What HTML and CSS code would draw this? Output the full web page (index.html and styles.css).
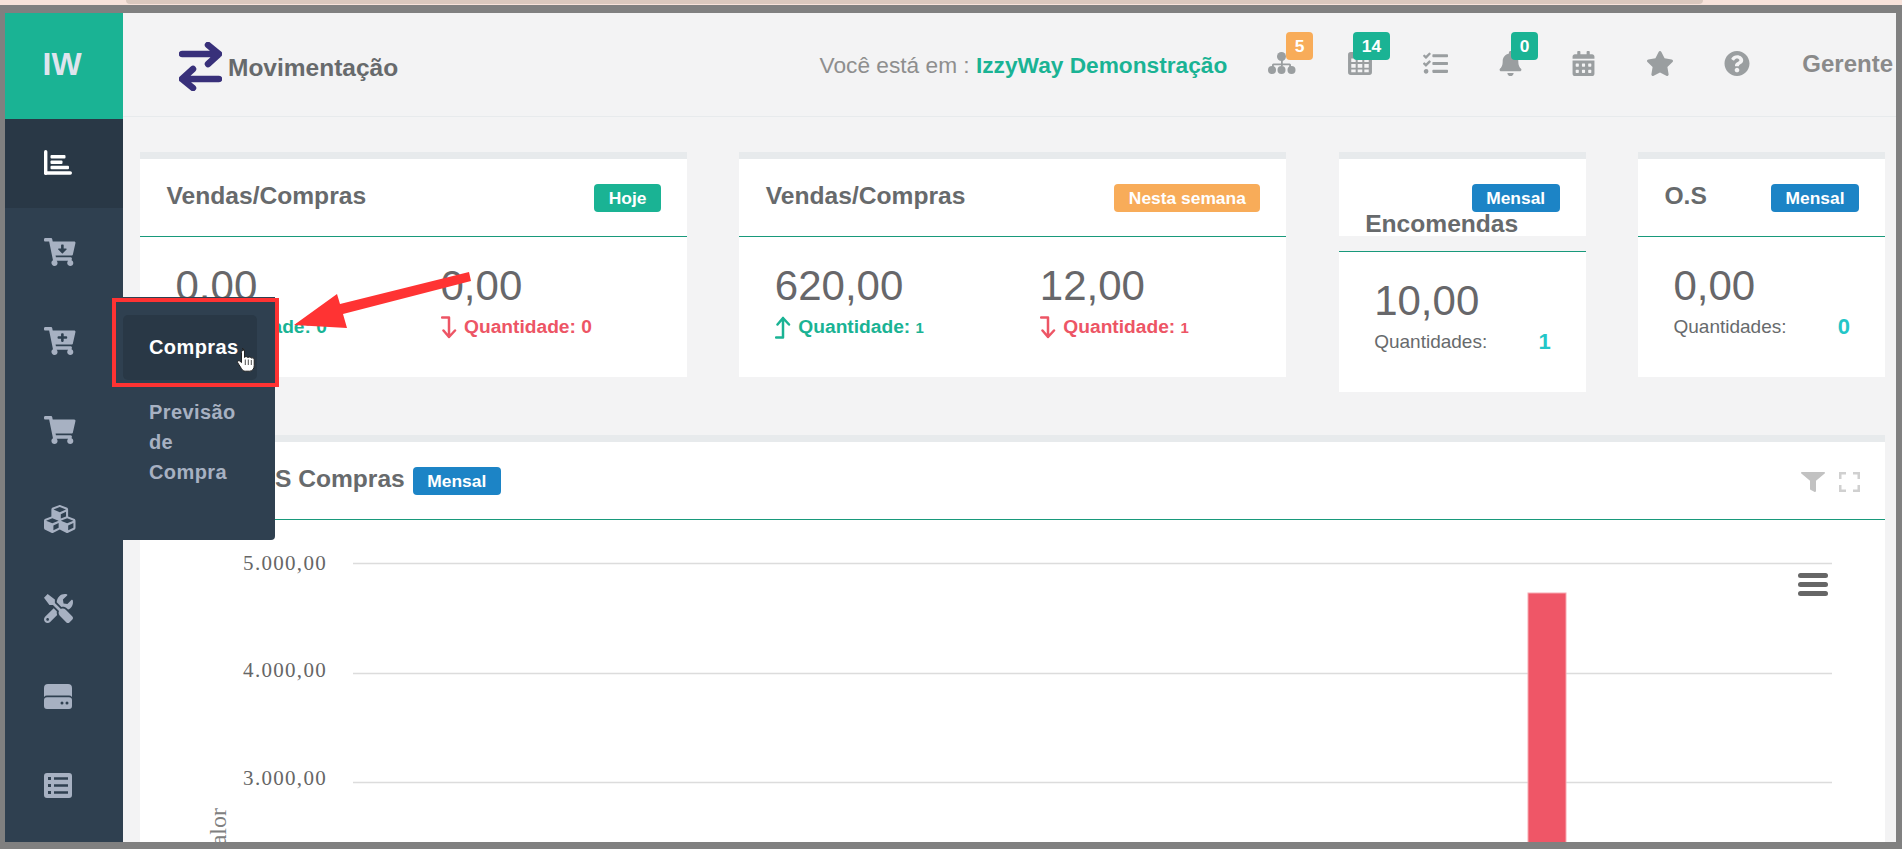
FILE: index.html
```html
<!DOCTYPE html>
<html lang="pt-BR">
<head>
<meta charset="utf-8">
<title>Movimentação</title>
<link rel="stylesheet" href="styles.css">
</head>
<body>
<div class="topstrip"><div class="tab"></div></div>
<div class="frame">
  <aside class="sidebar">
    <div class="logo">IW</div>
    <nav>
      <a class="nav-item active">
        <svg class="ni" viewBox="0 0 28 25"><rect x="0" y="0" width="3.400" height="25" rx="1.700"/><rect x="0" y="21.300" width="28" height="3.400" rx="1.700"/><rect x="6.500" y="5" width="15" height="3.400" rx="1"/><rect x="6.500" y="10.500" width="12" height="3.400" rx="1"/><rect x="6.500" y="15.800" width="18.500" height="3.400" rx="1"/></svg>
      </a>
      <a class="nav-item">
        <svg class="nc" viewBox="0 0 576 512"><path d="M504.717 320H211.572l6.545 32h268.418c15.401 0 26.816 14.301 23.403 29.319l-5.517 24.276C523.112 414.668 536 433.828 536 456c0 31.202-25.519 56.444-56.824 55.994-29.823-.429-54.35-24.631-55.155-54.447-.44-16.287 6.085-31.049 16.803-41.548H231.176C241.553 426.165 248 440.326 248 456c0 31.813-26.528 57.431-58.67 55.938-28.54-1.325-51.751-24.385-53.251-52.917-1.158-22.034 10.436-41.455 28.051-51.586L93.883 64H24C10.745 64 0 53.255 0 40V24C0 10.745 10.745 0 24 0h102.529c11.401 0 21.228 8.021 23.513 19.19L159.208 64H551.99c15.401 0 26.816 14.301 23.403 29.319l-47.273 208C525.637 312.246 515.923 320 504.717 320zM403.029 192H360v-60c0-6.627-5.373-12-12-12h-24c-6.627 0-12 5.373-12 12v60h-43.029c-10.691 0-16.045 12.926-8.485 20.485l67.029 67.029c4.686 4.686 12.284 4.686 16.971 0l67.029-67.029c7.559-7.559 2.205-20.485-8.486-20.485z"/></svg>
      </a>
      <a class="nav-item">
        <svg class="nc" viewBox="0 0 576 512"><path d="M504.717 320H211.572l6.545 32h268.418c15.401 0 26.816 14.301 23.403 29.319l-5.517 24.276C523.112 414.668 536 433.828 536 456c0 31.202-25.519 56.444-56.824 55.994-29.823-.429-54.35-24.631-55.155-54.447-.44-16.287 6.085-31.049 16.803-41.548H231.176C241.553 426.165 248 440.326 248 456c0 31.813-26.528 57.431-58.67 55.938-28.54-1.325-51.751-24.385-53.251-52.917-1.158-22.034 10.436-41.455 28.051-51.586L93.883 64H24C10.745 64 0 53.255 0 40V24C0 10.745 10.745 0 24 0h102.529c11.401 0 21.228 8.021 23.513 19.19L159.208 64H551.99c15.401 0 26.816 14.301 23.403 29.319l-47.273 208C525.637 312.246 515.923 320 504.717 320zM408 168h-48v-40c0-8.837-7.163-16-16-16h-16c-8.837 0-16 7.163-16 16v40h-48c-8.837 0-16 7.163-16 16v16c0 8.837 7.163 16 16 16h48v40c0 8.837 7.163 16 16 16h16c8.837 0 16-7.163 16-16v-40h48c8.837 0 16-7.163 16-16v-16c0-8.837-7.163-16-16-16z"/></svg>
        <div class="popup">
          <div class="popup-item current">Compras</div>
          <div class="popup-item">Previsão de Compra</div>
        </div>
      </a>
      <a class="nav-item">
        <svg class="nc" viewBox="0 0 576 512"><path d="M528.12 301.319l47.273-208C578.806 78.301 567.391 64 551.99 64H159.208l-9.166-44.81C147.758 8.021 137.93 0 126.529 0H24C10.745 0 0 10.745 0 24v16c0 13.255 10.745 24 24 24h69.883l70.248 343.435C147.325 417.1 136 435.222 136 456c0 30.928 25.072 56 56 56s56-25.072 56-56c0-15.674-6.447-29.835-16.824-40h209.647C430.447 426.165 424 440.326 424 456c0 30.928 25.072 56 56 56s56-25.072 56-56c0-22.172-12.888-41.332-31.579-50.405l5.517-24.276c3.413-15.018-8.002-29.319-23.403-29.319H218.117l-6.545-32h293.145c11.206 0 20.92-7.754 23.403-18.681z"/></svg>
      </a>
      <a class="nav-item">
        <svg class="nc" viewBox="0 32 512 448" preserveAspectRatio="none"><path d="M488.6 250.2L392 214V105.5c0-15-9.3-28.4-23.4-33.7l-100-37.5c-8.1-3.1-17.1-3.1-25.3 0l-100 37.5c-14.1 5.3-23.4 18.7-23.4 33.7V214l-96.6 36.2C9.3 255.5 0 268.9 0 283.9V394c0 13.6 7.7 26.1 19.9 32.2l100 50c10.1 5.1 22.1 5.1 32.2 0l103.9-52 103.9 52c10.1 5.1 22.1 5.1 32.2 0l100-50c12.2-6.1 19.9-18.6 19.9-32.2V283.9c0-15-9.3-28.4-23.4-33.7zM358 214.8l-85 31.9v-68.2l85-37v73.3zM154 104.1l102-38.2 102 38.2v.6l-102 41.4-102-41.4v-.6zm84 291.1l-85 42.5v-79.1l85-38.8v75.4zm0-112l-102 41.4-102-41.4v-.6l102-38.2 102 38.2v.6zm240 112l-85 42.5v-79.1l85-38.8v75.4zm0-112l-102 41.4-102-41.4v-.6l102-38.2 102 38.2v.6z"/></svg>
      </a>
      <a class="nav-item tools-item">
        <svg class="ni" viewBox="0 0 512 512"><path d="M501.1 395.7L384 278.6c-23.1-23.1-57.6-27.6-85.4-13.9L192 158.1V96L64 0 0 64l96 128h62.1l106.6 106.6c-13.6 27.8-9.2 62.3 13.9 85.4l117.1 117.1c14.6 14.6 38.2 14.6 52.7 0l52.7-52.7c14.5-14.6 14.5-38.2 0-52.7zM331.7 225c28.3 0 54.9 11 74.9 31l19.4 19.4c15.8-6.9 30.8-16.5 43.8-29.5 37.1-37.1 49.7-89.3 37.9-136.7-2.2-9-13.5-12.1-20.1-5.5l-74.4 74.4-67.9-11.3L334 98.9l74.4-74.4c6.6-6.6 3.4-17.9-5.7-20.2-47.4-11.7-99.6.9-136.6 37.9-28.5 28.5-41.9 66.1-41.2 103.6l82.1 82.1c8.1-1.9 16.5-2.9 24.7-2.9zm-103.9 82l-56.7-56.7L18.7 402.8c-25 25-25 65.5 0 90.5s65.5 25 90.5 0l123.6-123.6c-7.6-19.9-9.9-41.6-5-62.7zM64 472c-13.2 0-24-10.8-24-24 0-13.3 10.7-24 24-24s24 10.7 24 24c0 13.2-10.7 24-24 24z"/></svg>
      </a>
      <a class="nav-item">
        <svg class="ni flat" viewBox="0 0 28 25"><path d="M4 0h20a4 4 0 0 1 4 4v9a4 4 0 0 0-3-1.4H3A4 4 0 0 0 0 13V4a4 4 0 0 1 4-4z"/><path fill-rule="evenodd" d="M3 13.2h22a3 3 0 0 1 3 3V22a3 3 0 0 1-3 3H3a3 3 0 0 1-3-3v-5.800a3 3 0 0 1 3-3zM18 17.600a1.500 1.500 0 1 0 0 3 1.500 1.500 0 0 0 0-3zm5 0a1.500 1.500 0 1 0 0 3 1.500 1.500 0 0 0 0-3z"/></svg>
      </a>
      <a class="nav-item">
        <svg class="ni flat" viewBox="0 0 28 25"><path fill-rule="evenodd" d="M3 0h22a3 3 0 0 1 3 3v19a3 3 0 0 1-3 3H3a3 3 0 0 1-3-3V3a3 3 0 0 1 3-3zM4 4v3h3V4zm6 .2v2.600h14V4.200zM4 11v3h3v-3zm6 .2v2.600h14v-2.600zM4 18v3h3v-3zm6 .2v2.600h14v-2.600z"/></svg>
      </a>
    </nav>
  </aside>

  <div class="main">
    <header class="topbar">
      <svg class="swap" viewBox="0 0 43 49"><path d="M3 12h37M29 3l11 9-11 10M40 37H3M14 27L3 37l11 9"/></svg>
      <h2 class="page-title">Movimentação</h2>
      <p class="crumb">Você está em : <strong>IzzyWay Demonstração</strong></p>
      <div class="tools">
        <div class="tool">
          <svg class="ti i-site" viewBox="0 0 29 22"><rect x="14" y="8" width="1.800" height="6"/><path d="M5 16v-3a1.500 1.500 0 0 1 1.500-1.500h16a1.500 1.500 0 0 1 1.500 1.500v3h-1.800v-2.700H6.800V16z"/><circle cx="14.500" cy="4.500" r="4.500"/><circle cx="5" cy="18" r="4"/><circle cx="14.500" cy="18" r="4"/><circle cx="24.500" cy="18" r="4"/></svg>
          <span class="count warn one">5</span>
        </div>
        <div class="tool">
          <svg class="ti i-table" viewBox="0 0 26 25"><path fill-rule="evenodd" d="M3 0h20a3 3 0 0 1 3 3v19a3 3 0 0 1-3 3H3a3 3 0 0 1-3-3V3a3 3 0 0 1 3-3zM3.500 7v4h4.800V7zm7 0v4h5V7zm7.200 0v4h4.800V7zM3.500 13v4h4.800v-4zm7 0v4h5v-4zm7.200 0v4h4.800v-4zM3.500 19v3h4.800v-3zm7 0v3h5v-3zm7.200 0v3h4.800v-3z"/></svg>
          <span class="count green two">14</span>
        </div>
        <div class="tool">
          <svg class="ti i-tasks" viewBox="0 0 512 512"><path d="M139.61 35.5a12 12 0 0 0-17 0L58.93 98.81l-22.7-22.12a12 12 0 0 0-17 0L3.53 92.41a12 12 0 0 0 0 17l47.59 47.4a12.78 12.78 0 0 0 17.61 0l15.59-15.62L156.52 69a12.09 12.09 0 0 0 .09-17zm0 159.19a12 12 0 0 0-17 0l-63.68 63.72-22.7-22.1a12 12 0 0 0-17 0L3.53 252a12 12 0 0 0 0 17L51 316.5a12.77 12.77 0 0 0 17.6 0l15.7-15.69 72.2-72.22a12 12 0 0 0 .09-16.9zM64 368c-26.49 0-48.59 21.5-48.59 48S37.53 464 64 464a48 48 0 0 0 0-96zm432 16H208a16 16 0 0 0-16 16v32a16 16 0 0 0 16 16h288a16 16 0 0 0 16-16v-32a16 16 0 0 0-16-16zm0-320H208a16 16 0 0 0-16 16v32a16 16 0 0 0 16 16h288a16 16 0 0 0 16-16V80a16 16 0 0 0-16-16zm0 160H208a16 16 0 0 0-16 16v32a16 16 0 0 0 16 16h288a16 16 0 0 0 16-16v-32a16 16 0 0 0-16-16z"/></svg>
        </div>
        <div class="tool">
          <svg class="ti i-tall" viewBox="0 0 448 512"><path d="M224 512c35.32 0 63.97-28.65 63.97-64H160.03c0 35.35 28.65 64 63.97 64zm215.39-149.71c-19.32-20.76-55.47-51.99-55.47-154.29 0-77.7-54.48-139.9-127.94-155.16V32c0-17.67-14.32-32-31.98-32s-31.98 14.33-31.98 32v20.84C118.56 68.1 64.08 130.3 64.08 208c0 102.3-36.15 133.53-55.47 154.29-6 6.45-8.66 14.16-8.61 21.71.11 16.4 12.98 32 32.1 32h383.8c19.12 0 32-15.6 32.1-32 .05-7.55-2.61-15.27-8.61-21.71z"/></svg>
          <span class="count green three">0</span>
        </div>
        <div class="tool">
          <svg class="ti i-tall" viewBox="0 0 448 512"><path d="M0 464c0 26.5 21.5 48 48 48h352c26.5 0 48-21.5 48-48V192H0v272zm320-196c0-6.6 5.4-12 12-12h40c6.6 0 12 5.4 12 12v40c0 6.6-5.4 12-12 12h-40c-6.6 0-12-5.400-12-12v-40zm0 128c0-6.6 5.4-12 12-12h40c6.6 0 12 5.4 12 12v40c0 6.6-5.4 12-12 12h-40c-6.6 0-12-5.4-12-12v-40zM192 268c0-6.6 5.4-12 12-12h40c6.6 0 12 5.4 12 12v40c0 6.6-5.4 12-12 12h-40c-6.6 0-12-5.4-12-12v-40zm0 128c0-6.6 5.4-12 12-12h40c6.6 0 12 5.4 12 12v40c0 6.6-5.4 12-12 12h-40c-6.6 0-12-5.4-12-12v-40zM64 268c0-6.6 5.4-12 12-12h40c6.6 0 12 5.4 12 12v40c0 6.6-5.4 12-12 12H76c-6.6 0-12-5.4-12-12v-40zm0 128c0-6.6 5.4-12 12-12h40c6.6 0 12 5.4 12 12v40c0 6.6-5.4 12-12 12H76c-6.6 0-12-5.4-12-12v-40zM400 64h-48V16c0-8.800-7.200-16-16-16h-32c-8.800 0-16 7.200-16 16v48H160V16c0-8.800-7.200-16-16-16h-32c-8.800 0-16 7.200-16 16v48H48C21.500 64 0 85.500 0 112v48h448v-48c0-26.500-21.500-48-48-48z"/></svg>
        </div>
        <div class="tool">
          <svg class="ti i-star" viewBox="0 0 576 512"><path d="M259.3 17.8L194 150.2 47.9 171.5c-26.2 3.8-36.7 36.1-17.7 54.6l105.7 103-25 145.5c-4.5 26.3 23.2 46 46.4 33.7L288 439.6l130.7 68.7c23.2 12.2 50.9-7.4 46.4-33.7l-25-145.5 105.7-103c19-18.5 8.5-50.8-17.7-54.6L382 150.2 316.7 17.8c-11.7-23.6-45.6-23.9-57.4 0z"/></svg>
        </div>
        <div class="tool">
          <svg class="ti i-help" viewBox="8 8 496 496"><path d="M504 256c0 136.997-111.043 248-248 248S8 392.997 8 256C8 119.083 119.043 8 256 8s248 111.083 248 248zM262.655 90c-54.497 0-89.255 22.957-116.549 63.758-3.536 5.286-2.353 12.415 2.715 16.258l34.699 26.31c5.205 3.947 12.621 3.008 16.665-2.122 17.864-22.658 30.113-35.797 57.303-35.797 20.429 0 45.698 13.148 45.698 32.958 0 14.976-12.363 22.667-32.534 33.976C247.128 238.528 216 254.941 216 296v4c0 6.627 5.373 12 12 12h56c6.627 0 12-5.373 12-12v-1.333c0-28.462 83.186-29.647 83.186-106.667 0-58.002-60.165-102-116.531-102zM256 338c-25.365 0-46 20.635-46 46 0 25.364 20.635 46 46 46s46-20.636 46-46c0-25.365-20.635-46-46-46z"/></svg>
        </div>
      </div>
      <span class="user">Gerente</span>
    </header>

    <section class="content">
      <div class="cards">
        <article class="card">
          <div class="card-head"><h5 class="card-title">Vendas/Compras</h5><span class="label green">Hoje</span></div>
          <div class="card-body split">
            <div>
              <div class="value">0,00</div>
              <div class="qty up"><svg class="lvl" viewBox="0 0 16 23"><path d="M1 21.500h7V2M2.500 8.500L8 2l6 6.500"/></svg><span>Quantidade: 0</span></div>
            </div>
            <div>
              <div class="value">0,00</div>
              <div class="qty down"><svg class="lvl" viewBox="0 0 16 23"><path d="M1 1.500h7V21M2.500 14.500L8 21l6-6.500"/></svg><span>Quantidade: 0</span></div>
            </div>
          </div>
        </article>
        <article class="card">
          <div class="card-head"><h5 class="card-title">Vendas/Compras</h5><span class="label warn">Nesta semana</span></div>
          <div class="card-body split">
            <div>
              <div class="value">620,00</div>
              <div class="qty up"><svg class="lvl" viewBox="0 0 16 23"><path d="M1 21.500h7V2M2.500 8.500L8 2l6 6.500"/></svg><span>Quantidade: <small>1</small></span></div>
            </div>
            <div>
              <div class="value">12,00</div>
              <div class="qty down"><svg class="lvl" viewBox="0 0 16 23"><path d="M1 1.500h7V21M2.500 14.500L8 21l6-6.500"/></svg><span>Quantidade: <small>1</small></span></div>
            </div>
          </div>
        </article>
        <article class="card">
          <div class="card-head stacked"><span class="label blue">Mensal</span><h5 class="card-title">Encomendas</h5></div>
          <div class="card-body gapped">
            <div class="value">10,00</div>
            <div class="total"><span>Quantidades:</span><b>1</b></div>
          </div>
        </article>
        <article class="card">
          <div class="card-head"><h5 class="card-title">O.S</h5><span class="label blue">Mensal</span></div>
          <div class="card-body">
            <div class="value">0,00</div>
            <div class="total"><span>Quantidades:</span><b>0</b></div>
          </div>
        </article>
      </div>

      <article class="card chart-card">
        <div class="card-head chart-head">
          <h5 class="card-title">O.S Compras</h5>
          <span class="label blue">Mensal</span>
          <svg class="ctl filter" viewBox="0 0 512 512" preserveAspectRatio="none"><path d="M487.976 0H24.028C2.71 0-8.047 25.866 7.058 40.971L192 225.941V432c0 7.831 3.821 15.17 10.237 19.662l80 55.98C298.02 518.69 320 507.493 320 487.98V225.941l184.947-184.97C520.021 25.896 509.338 0 487.976 0z"/></svg>
          <svg class="ctl expand" viewBox="0 0 21 20"><path d="M1 7V1h6M14 1h6v6M20 13v6h-6M7 19H1v-6"/></svg>
        </div>
        <svg class="chart" viewBox="0 0 1745 322">
          <g class="grid">
            <line x1="213" x2="1692" y1="43.5" y2="43.5"/>
            <line x1="213" x2="1692" y1="153.500" y2="153.500"/>
            <line x1="213" x2="1692" y1="262.500" y2="262.500"/>
          </g>
          <g class="ylabels">
            <text x="187" y="50">5.000,00</text>
            <text x="187" y="157">4.000,00</text>
            <text x="187" y="265">3.000,00</text>
          </g>
          <text class="ytitle" transform="translate(86 288) rotate(-90)">Valor</text>
          <rect class="bar" x="1388" y="73" width="38" height="260"/>
          <g class="burger">
            <rect x="1658" y="53" width="30" height="5" rx="2.500"/>
            <rect x="1658" y="62" width="30" height="5" rx="2.500"/>
            <rect x="1658" y="71" width="30" height="5" rx="2.500"/>
          </g>
        </svg>
      </article>
    </section>
  </div>
</div>

<svg class="annot" viewBox="0 0 1902 849">
  <rect class="annot-box" x="114" y="300" width="163" height="85"/>
  <polygon class="annot-arrow" points="294,325 337,294 340,304 469,272 471,281 343,314 347,328"/>
  <path class="annot-hand" d="M242 348.500c1.500 0 2.500 1 2.500 2.500v6.500c.5-1.200 3-1.200 3.500.3.400-1.100 3-1 3.400.4.600-.7 2.800-.5 2.800 1.500v6c0 3-1.800 5.500-4.700 5.500h-4c-2 0-3-.8-4-2.500l-3.800-6c-.8-1.400.8-2.800 2.200-1.600l1.600 1.500v-10.100c0-1.500 1-2.500 2.500-2.500z"/>
  <path class="annot-hand-lines" d="M245.300 359.500v5.500M248.300 359.500v5.500M251.300 360v5"/>
</svg>
</body>
</html>
```
FILE: styles.css
```css
* { box-sizing: border-box; }
html, body { margin: 0; padding: 0; height: 100%; overflow: hidden; }
body {
  position: relative;
  background: #808080;
  font-family: "Liberation Sans", Arial, sans-serif;
  color: #676a6c;
}
h2, h5, p { margin: 0; }

.topstrip { height: 5px; background: #f7e2da; }
.tab { width: 1577px; height: 4px; margin-left: 126px; background: #dac8be; border-radius: 0 0 8px 8px; }

.frame {
  display: flex;
  height: 844px;
  padding: 8px 6px 7px 5px;
  background: #808080;
}

/* Sidebar */
.sidebar { position: relative; z-index: 2; width: 118px; flex: none; background: #2f4050; height: 829px; }
.logo {
  height: 106px;
  padding: 31px 0 0 37.500px;
  background: #1ab394;
  color: #dfe4ed;
  font-size: 32px;
  font-weight: 700;
  line-height: 40px;
}
.nav-item { position: relative; display: flex; align-items: center; height: 89px; padding: 0 0 2px 39px; }
.nav-item.active { padding-bottom: 3px; background: #293846; }
.ni { width: 28px; height: 28px; fill: #a7b1c2; }
.ni.flat { height: 25px; }
.nav-item.active .ni { height: 25px; fill: #fff; }
.nc { width: 31.500px; height: 28px; fill: #a7b1c2; }
.tools-item { padding-bottom: 0; }
.tools-item .ni { width: 29px; height: 29px; }

.popup {
  position: absolute;
  top: 0;
  left: 100%;
  width: 152px;
  height: 243px;
  padding-top: 18px;
  background: #2f4050;
  border-radius: 0 0 4px 0;
  font-size: 20px;
  font-weight: 700;
  letter-spacing: .4px;
  line-height: 30px;
  color: #a7b1c2;
}
.popup-item { padding: 0 26px; width: 134px; }
.popup-item.current {
  display: flex;
  align-items: center;
  height: 65px;
  padding-bottom: 2px;
  margin-bottom: 17px;
  background: #293846;
  border-radius: 5px;
  color: #fff;
}

/* Main */
.main { flex: 1; min-width: 0; height: 829px; overflow: hidden; background: #f3f3f4; }
.topbar {
  display: flex;
  align-items: center;
  height: 104px;
  padding: 0 3px 0 56px;
  border-bottom: 1px solid #e7eaec;
}
.swap { width: 43px; height: 49px; margin: 4px 6px 0 0; fill: none; stroke: #38307a; stroke-width: 6.500; stroke-linecap: round; stroke-linejoin: round; }
.page-title { font-size: 24.500px; font-weight: 700; line-height: 30px; margin-top: 7px; color: #676a6c; }
.crumb { margin-left: auto; font-size: 22.700px; line-height: 28px; color: #8e8e8e; white-space: nowrap; }
.crumb strong { color: #1ab394; }
.tools { display: flex; gap: 50.500px; margin-left: 40px; }
.tool { position: relative; display: flex; align-items: center; height: 28px; margin-bottom: 3px; }
.ti { fill: #9a9ea0; }
.i-site { width: 29px; height: 22px; }
.i-table { width: 26px; height: 23px; }
.i-tasks { width: 25px; height: 25px; }
.i-tall { width: 23px; height: 25px; }
.i-star { width: 28px; height: 25px; }
.i-help { width: 26px; height: 25px; }
.count {
  position: absolute;
  top: -17px;
  height: 28px;
  padding: 0 9px;
  border-radius: 4px;
  color: #fff;
  font-size: 17.400px;
  font-weight: 700;
  line-height: 28px;
}
.count.one { left: 18.500px; }
.count.two { left: 6px; }
.count.three { left: 12px; }
.user { margin: 0 0 1px 52px; font-size: 24px; font-weight: 700; color: #8a8a8a; white-space: nowrap; }

.green { background: #1ab394; }
.warn { background: #f8ac59; }
.blue { background: #1c84c6; }

.content { padding: 35px 11px 0 17px; }
.cards { display: grid; grid-template-columns: 547px 547px 247px 247px; column-gap: 52.330px; align-items: start; }

.card { background: #fff; border-top: 7px solid #e7eaec; }
.card-head {
  display: flex;
  justify-content: space-between;
  align-items: flex-start;
  height: 78px;
  padding: 25px 26px 0 26.500px;
  border-bottom: 1px solid #18997b;
}
.card-title { font-size: 24.600px; font-weight: 700; line-height: 24px; color: #676a6c; white-space: nowrap; }
.label {
  height: 28px;
  padding: 0 14.500px;
  border-radius: 4px;
  color: #fff;
  font-size: 17.400px;
  font-weight: 700;
  line-height: 28px;
  white-space: nowrap;
}
.card-head.stacked { display: block; height: 77px; border-bottom: 0; }
.stacked .label { display: block; width: max-content; margin-left: auto; }

.card-body { height: 140px; padding: 24px 35px 0 35.500px; }
.card-body.gapped { height: 141px; margin-top: 15px; border-top: 1px solid #18997b; box-shadow: 0 -15px 0 #f3f3f4; }
.card-body.split { display: grid; grid-template-columns: 265px 1fr; }
.value { font-size: 42px; line-height: 50px; color: #67676a; }
.qty {
  display: flex;
  align-items: center;
  gap: 7.500px;
  height: 32px;
  font-size: 19.200px;
  font-weight: 700;
  white-space: pre;
}
.qty small { font-size: 15px; }
.qty.up { color: #1ab394; stroke: #1ab394; }
.qty.down { color: #ed5565; stroke: #ed5565; }
.lvl { width: 16px; height: 23px; fill: none; stroke-width: 2.500; stroke-linecap: round; stroke-linejoin: round; }
.total { display: flex; justify-content: space-between; align-items: center; height: 32px; font-size: 19px; color: #676a6c; }
.total b { font-size: 22px; color: #23c6c8; }

.chart-card { margin-top: 43px; height: 500px; }
.chart-head { justify-content: flex-start; padding-left: 109px; padding-right: 25px; }
.chart-head .label { margin-left: 8px; }
.ctl { height: 20px; margin-top: 5px; }
.filter { width: 24px; margin-left: auto; fill: #c2c2c2; }
.expand { width: 21px; margin-left: 14px; fill: none; stroke: #d0d0d0; stroke-width: 3; }

.chart { display: block; width: 1745px; height: 322px; }
.grid line { stroke: #dcdcdc; stroke-width: 1.500; }
.ylabels text { font-family: "Liberation Serif", "Times New Roman", serif; font-size: 21px; letter-spacing: 1.300px; fill: #666; text-anchor: end; }
.ytitle { font-family: "Liberation Serif", "Times New Roman", serif; font-size: 24px; fill: #808080; text-anchor: end; }
.bar { fill: #ef5667; stroke: #f7a9b2; stroke-width: 1; }
.burger rect { fill: #666; }

/* Annotations drawn on top of the screenshot */
.annot { position: absolute; top: 0; left: 0; width: 1902px; height: 849px; z-index: 5; pointer-events: none; }
.annot-box { fill: none; stroke: #ff3333; stroke-width: 4; }
.annot-arrow { fill: #ff3333; }
.annot-hand { fill: #fff; stroke: #222; stroke-width: 1; }
.annot-hand-lines { fill: none; stroke: #222; stroke-width: .8; }
```
